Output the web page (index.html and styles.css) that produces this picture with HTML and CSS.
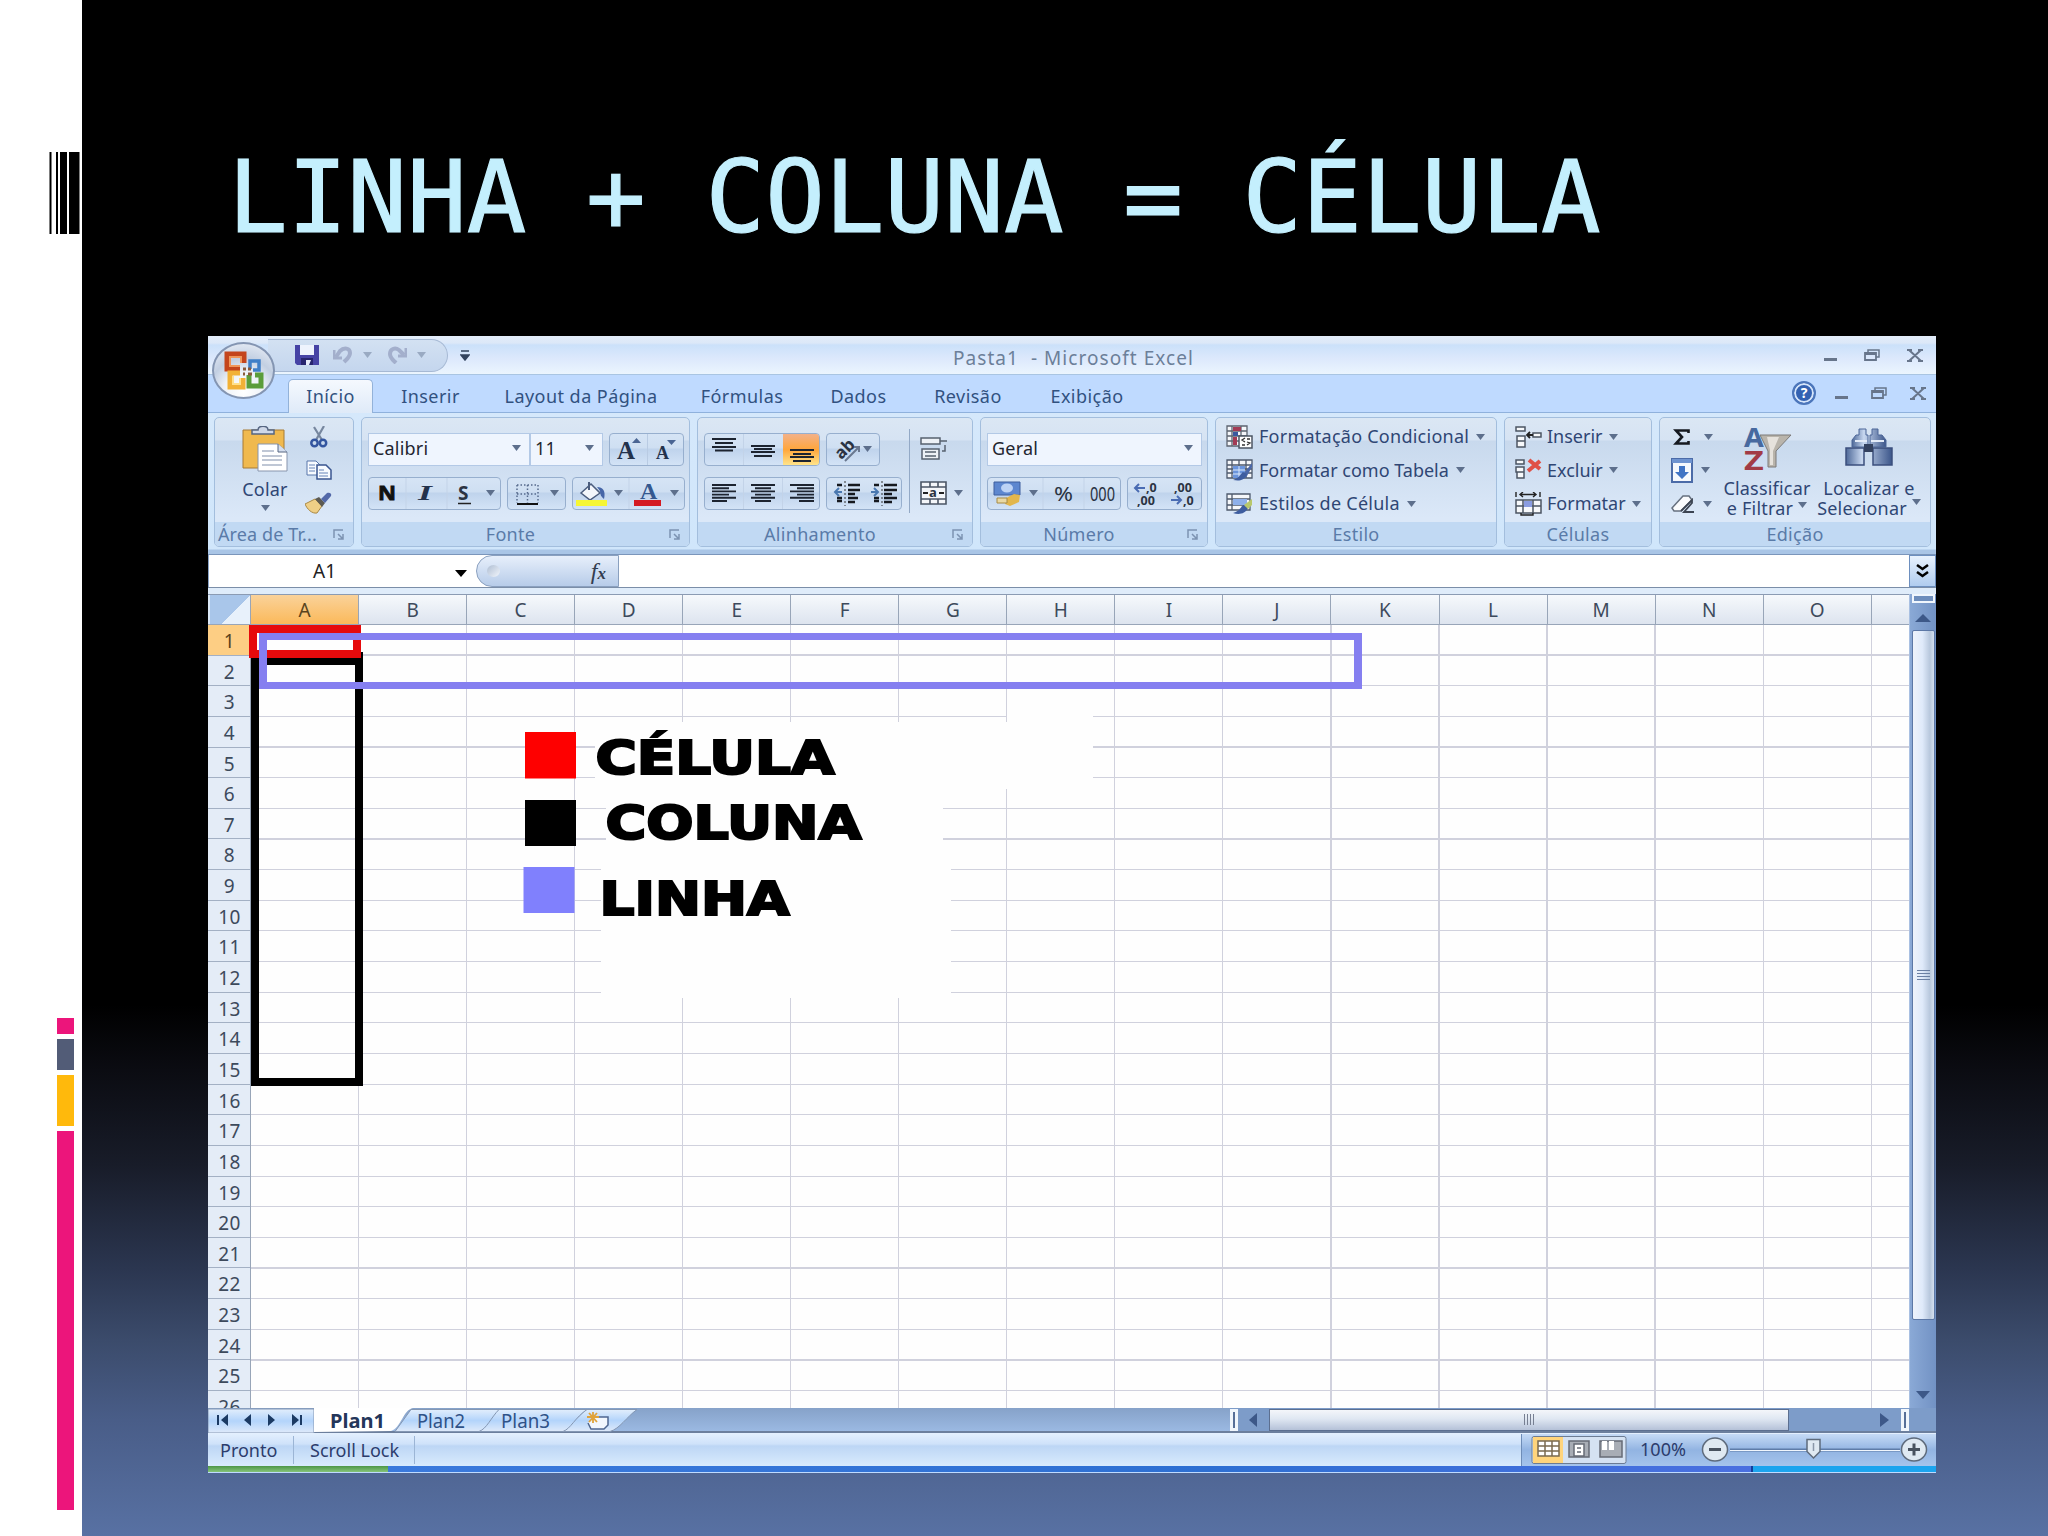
FILE: index.html
```
<!DOCTYPE html>
<html lang="pt-BR">
<head>
    <meta charset="UTF-8">
    <meta name="viewport" content="width=device-width, initial-scale=1.0">
    <title>Linha + Coluna = Célula</title>
    <link rel="stylesheet" href="styles.css">
</head>
<body>
    <svg class="defs" width="0" height="0">
        <defs>
            <symbol id="down" viewBox="0 0 9 6"><path d="M0 0h9L4.500 6z" fill="#5d6f8c"/></symbol>
            <symbol id="launch" viewBox="0 0 12 11"><path d="M1 9V1h9M5 5l5 5M10 5v5H5" fill="none" stroke="#7c93b2" stroke-width="1.500"/></symbol>
            <symbol id="restore" viewBox="0 0 16 12"><path d="M4 3V1h11v7h-3" fill="none" stroke="#67758b" stroke-width="1.500"/><path d="M1 4h11v7H1zM1 5h11" fill="none" stroke="#67758b" stroke-width="1.800"/></symbol>
            <symbol id="close" viewBox="0 0 16 13"><path d="M2 1l12 11M14 1L2 12M0 1h5M11 1h5M0 12h5M11 12h5" fill="none" stroke="#67758b" stroke-width="2"/></symbol>
            <linearGradient id="steel" x1="0" x2="1"><stop offset="0" stop-color="#4d6898"/><stop offset=".35" stop-color="#c8d8f0"/><stop offset="1" stop-color="#3c568a"/></linearGradient>
        </defs>
    </svg>

    <div class="slide">
        <aside class="sidebar">
            <svg class="barcode" width="31" height="82"><path d="M.500 0h2v82h-2zM7 0h2v82H7zM11 0h7v82h-7zM20 0h10.500v82H20z"/></svg>
            <div class="strips">
                <span class="strip pink small"></span>
                <span class="strip slate"></span>
                <span class="strip yellow"></span>
                <span class="strip pink"></span>
            </div>
        </aside>

        <main class="content">
            <h1>LINHA + COLUNA = CÉLULA</h1>

            <div class="excel">
                <!-- title bar -->
                <div class="titlebar">
                    <div class="qat">
                        <svg class="save" width="24" height="20" viewBox="0 0 24 20"><path d="M0 0h24v20H2l-2-2z" fill="#4643a5"/><path d="M5 0h14v10H5z" fill="#eef3fd"/><path d="M6 13h12v7H6z" fill="#28256f"/><path d="M11 15h5l-2 5h-3z" fill="#e8ecfa"/></svg>
                        <svg class="undo" width="20" height="18" viewBox="0 0 20 18"><path d="M1 4v8h8" fill="none" stroke="#a3afcc" stroke-width="3"/><path d="M3 11l4-6c4-4 10-3 10 2 0 4-3 6-6 9" fill="none" stroke="#a3afcc" stroke-width="4"/></svg>
                        <svg class="mini" width="9" height="6"><use href="#down"/></svg>
                        <svg class="redo" width="20" height="18" viewBox="0 0 20 18"><path d="M19 2v8h-8" fill="none" stroke="#a3afcc" stroke-width="3"/><path d="M17 9l-5-5C8 1 3 3 3 8c0 4 3 6 6 9" fill="none" stroke="#a3afcc" stroke-width="4"/></svg>
                        <svg class="mini" width="9" height="6"><use href="#down"/></svg>
                    </div>
                    <svg class="customize" width="10" height="11"><path d="M1 1h8M1 5h8l-4 5z" fill="#33445f" stroke="#33445f" stroke-width="1.500"/></svg>
                    <span class="doc-title">Pasta1 &nbsp;- Microsoft Excel</span>
                    <div class="controls">
                        <span class="min"></span>
                        <svg width="16" height="12"><use href="#restore"/></svg>
                        <svg width="16" height="13"><use href="#close"/></svg>
                    </div>
                </div>
                <div class="orb">
                    <svg width="40" height="40" viewBox="0 0 40 40" fill="none">
                        <path d="M16 18H3V3h17v9" stroke="#c4451c" stroke-width="5"/><path d="M16 15H6V6h11v6" stroke="#f0965a" stroke-width="2"/>
                        <path d="M26 10h9v9h-9z" stroke="#3f7fc8" stroke-width="3.500" stroke-dasharray="24 4"/>
                        <path d="M16 22H6v14h13v-9" stroke="#f2b136" stroke-width="5"/><path d="M9 25v8h7v-6" stroke="#ffe08a" stroke-width="2"/>
                        <path d="M25 24v11h12V24h-6" stroke="#5b9d3a" stroke-width="5"/>
                        <path d="M19 18h3M24 18h3M19 23h2M24 23h4" stroke="#8a5a3a" stroke-width="3"/>
                    </svg>
                </div>

                <!-- ribbon tabs -->
                <nav class="tabs">
                    <span class="tab active t1">Início</span>
                    <span class="tab t2">Inserir</span>
                    <span class="tab t3">Layout da Página</span>
                    <span class="tab t4">Fórmulas</span>
                    <span class="tab t5">Dados</span>
                    <span class="tab t6">Revisão</span>
                    <span class="tab t7">Exibição</span>
                    <div class="controls doc">
                        <span class="help">?</span>
                        <span class="min"></span>
                        <svg width="16" height="12"><use href="#restore"/></svg>
                        <svg width="16" height="13"><use href="#close"/></svg>
                    </div>
                </nav>

                <!-- ribbon -->
                <div class="ribbon">
                    <section class="group g-clip">
                        <div class="body">
                            <div class="big paste">
                                <svg width="46" height="46" viewBox="0 0 46 46"><path d="M1 4h41v38H1z" fill="#f0b94e" stroke="#a77b35"/><path d="M10 8V4h6c0-5 10-5 10 0h6v4z" fill="#cfd8e8" stroke="#566682" stroke-width="1.500"/><path d="M16 18h20l9 8v19H16z" fill="#fff" stroke="#8895ad"/><path d="M36 18v8h9" fill="#d5dfef" stroke="#566682"/><path d="M20 25h12M20 30h20M20 34h20M20 39h20" stroke="#aab5c8" stroke-width="1.500"/></svg>
                                <span>Colar</span>
                                <svg class="arr" width="9" height="6"><use href="#down"/></svg>
                            </div>
                            <div class="stack">
                                <svg width="18" height="22" viewBox="0 0 18 22" fill="none"><path d="M4 1l8 13M14 0L6 14" stroke="#77879f" stroke-width="2.200"/><circle cx="4.500" cy="17" r="3.200" stroke="#33559f" stroke-width="2.500"/><circle cx="13" cy="17" r="3.200" stroke="#33559f" stroke-width="2.500"/></svg>
                                <svg width="26" height="20" viewBox="0 0 26 20"><path d="M1 1h9l4 4v10H1z" fill="#f8fbff" stroke="#5876ab"/><path d="M11 5h9l5 5v9H11z" fill="#f8fbff" stroke="#3a5690" stroke-width="1.500"/><path d="M3 5h6M3 8h6M3 11h6M13 10h5M13 13h9M13 16h9" stroke="#6784b8"/></svg>
                                <svg width="27" height="22" viewBox="0 0 27 22"><path d="M0 12l10-5 7 7-5 7c-5 1-10-4-12-9z" fill="#efcf86" stroke="#a98845"/><path d="M10 7l4-2 6 6-3 4z" fill="#5c5a52"/><path d="M16 7l6-6c3-1 5 1 4 3l-6 7z" fill="#5268a8"/></svg>
                            </div>
                        </div>
                        <footer><span>Área de Tr...</span><svg width="12" height="11"><use href="#launch"/></svg></footer>
                    </section>

                    <section class="group g-font">
                        <div class="body rows">
                            <div class="row">
                                <div class="combo c-font"><span>Calibri</span><svg width="9" height="6"><use href="#down"/></svg></div>
                                <div class="combo c-size"><span>11</span><svg width="9" height="6"><use href="#down"/></svg></div>
                                <div class="btns b-grow">
                                    <svg width="75" height="31" viewBox="0 0 75 31"><path d="M37.500 0v31" stroke="#b9cbe3"/><text class="serif" x="7" y="25" font-size="25">A</text><text class="serif" x="46" y="25" font-size="18">A</text><path d="M22 9h9l-4.500-5z" fill="#4a6593"/><path d="M57 6h9l-4.500 5z" fill="#4a6593"/></svg>
                                </div>
                            </div>
                            <div class="row">
                                <div class="btns b-nis">
                                    <svg width="131" height="31" viewBox="0 0 131 31"><path d="M37 0v31M78 0v31" stroke="#c3d3e8"/><text class="sans b dark" x="9" y="22" font-size="19" stroke="#111" stroke-width=".8" textLength="18" lengthAdjust="spacingAndGlyphs">N</text><text class="serif it" x="49" y="22" font-size="21" textLength="14" lengthAdjust="spacingAndGlyphs">I</text><text class="sans b" x="89" y="22" font-size="19">S</text><path d="M89 25.500h13" stroke="#222" stroke-width="1.600"/><use href="#down" x="117" y="12" width="9" height="6"/></svg>
                                </div>
                                <div class="btns b-bord">
                                    <svg width="57" height="31" viewBox="0 0 57 31"><path d="M9 7h21v18M9 7v18M19.500 7v18M9 16h21" fill="none" stroke="#566a8c" stroke-width="1.500" stroke-dasharray="1.500 2"/><path d="M9 26h21" stroke="#111" stroke-width="2.200"/><use href="#down" x="42" y="12" width="9" height="6"/></svg>
                                </div>
                                <div class="btns b-color">
                                    <svg width="112" height="31" viewBox="0 0 112 31"><path d="M8 15l10-9 9 9-10 7z" fill="#f3f6fb" stroke="#4b5d7e" stroke-width="1.500"/><path d="M16 4v8" stroke="#4b5d7e" stroke-width="2"/><path d="M24 9c6 0 9 4 7 12-3-2-4-5-4-8z" fill="#4666a8"/><path d="M3 22h31v6H3z" fill="#f6f634"/><use href="#down" x="41" y="12" width="9" height="6"/><path d="M56 0v31" stroke="#c3d3e8"/><text class="serif blue" x="67" y="21" font-size="24">A</text><path d="M61 22h27v6H61z" fill="#d41a22"/><use href="#down" x="97" y="12" width="9" height="6"/></svg>
                                </div>
                            </div>
                        </div>
                        <footer><span>Fonte</span><svg width="12" height="11"><use href="#launch"/></svg></footer>
                    </section>

                    <section class="group g-align">
                        <div class="body">
                            <div class="rows">
                                <div class="row">
                                    <div class="btns b-al">
                                        <svg width="115" height="31" viewBox="0 0 115 31"><defs><linearGradient id="hot" x2="0" y2="1"><stop stop-color="#f3b189"/><stop offset=".5" stop-color="#ffa63b"/><stop offset="1" stop-color="#ffe48a"/></linearGradient></defs><path d="M78 0h37v31H78z" fill="url(#hot)"/><path d="M38.500 0v31" stroke="#c3d3e8"/><path d="M7 5h24M10 9h18M7 13h24M10 16.500h18M46 12h24M49 15h18M46 18h24M49 22h18M85 16h24M88 20h18M85 23h24M88 27h18" stroke="#1d2430" stroke-width="1.900"/></svg>
                                    </div>
                                    <div class="btns b-ab">
                                        <svg width="53" height="31" viewBox="0 0 53 31"><text class="sans b" x="10" y="24" font-size="17" transform="rotate(-45 15 20)">ab</text><path d="M18 27l13-13M27 13h5v5" stroke="#6a7890" stroke-width="2" fill="none"/><use href="#down" x="36" y="12" width="9" height="6"/></svg>
                                    </div>
                                </div>
                                <div class="row">
                                    <div class="btns b-al">
                                        <svg width="115" height="31" viewBox="0 0 115 31"><path d="M38.500 0v31M77.500 0v31" stroke="#c3d3e8"/><path d="M7 7h24M7 10.200h17M7 13.400h24M7 16.600h17M7 19.800h24M7 23h15M46 7h24M50 10.200h16M46 13.400h24M50 16.600h16M46 19.800h24M50 23h16M85 7h24M92 10.200h17M85 13.400h24M92 16.600h17M85 19.800h24M94 23h15" stroke="#1d2430" stroke-width="1.900"/></svg>
                                    </div>
                                    <div class="btns b-ind">
                                        <svg width="75" height="31" viewBox="0 0 75 31"><path d="M10 7h5M10 20h5M10 23h5M21 7h12M21 12h12M21 16h7M21 20h10M21 24h7M47 7h5M47 20h5M47 23h5M57 7h13M57 12h13M57 16h8M57 20h13M57 24h8" stroke="#16191f" stroke-width="2.500"/><path d="M18 3v25M55 3v25" stroke="#333" stroke-dasharray="2 2"/><path d="M15 14H9M12 10l-4 4 4 4M44 14h6M47 10l4 4-4 4" stroke="#4a78b0" stroke-width="2" fill="none"/></svg>
                                    </div>
                                </div>
                            </div>
                            <div class="wraps">
                                <svg width="28" height="24" viewBox="0 0 28 24"><path d="M1 1h19v6H1zM2 12h17v10H2z" fill="#edf1f6" stroke="#57616f" stroke-width="1.500"/><path d="M20 4h7M5 15h11M5 19h11M25 8v6h-3" fill="none" stroke="#57616f" stroke-width="1.500"/></svg>
                                <div class="merge">
                                    <svg width="28" height="24" viewBox="0 0 28 24"><path d="M1 1h25v22H1zM1 6h25M1 18h25M10 1v5M18 1v5M10 18v5M18 18v5" fill="#f4f6f9" stroke="#4b5665" stroke-width="1.600"/><text class="sans b" x="9" y="16" font-size="13">a</text><path d="M3 12h5M19 12h5" stroke="#222" stroke-width="2"/></svg>
                                    <svg width="9" height="6"><use href="#down"/></svg>
                                </div>
                            </div>
                        </div>
                        <footer><span>Alinhamento</span><svg width="12" height="11"><use href="#launch"/></svg></footer>
                    </section>

                    <section class="group g-num">
                        <div class="body rows">
                            <div class="row">
                                <div class="combo c-num"><span>Geral</span><svg width="9" height="6"><use href="#down"/></svg></div>
                            </div>
                            <div class="row">
                                <div class="btns b-num">
                                    <svg width="133" height="31" viewBox="0 0 133 31"><path d="M55 0v31M96 0v31" stroke="#c3d3e8"/><path d="M6 4h26v13H6z" fill="#5d87cf" stroke="#3e5f9e"/><ellipse cx="19" cy="10" rx="6" ry="4.500" fill="#bdd3f5"/><path d="M18 20l8-4 6 1-1 7-9 4-5-2z" fill="#e2b64c"/><path d="M9 20h10v5H9z" fill="#e9d9a4" stroke="#a68a45"/><use href="#down" x="41" y="12" width="9" height="6"/><text class="sans" x="66" y="23" font-size="20" textLength="19" lengthAdjust="spacingAndGlyphs">%</text><text class="sans" x="102" y="23" font-size="19" textLength="25" lengthAdjust="spacingAndGlyphs">000</text></svg>
                                </div>
                                <div class="btns b-dec">
                                    <svg width="75" height="31" viewBox="0 0 75 31"><text class="sans b" x="18" y="14" font-size="12.500">,0</text><text class="sans b" x="9" y="27" font-size="12.500">,00</text><text class="sans b" x="46" y="14" font-size="12.500">,00</text><text class="sans b" x="55" y="27" font-size="12.500">,0</text><path d="M17 10H7M11 6l-4 4 4 4M43 22h9M49 18l4 4-4 4" fill="none" stroke="#4a6cb3" stroke-width="2"/></svg>
                                </div>
                            </div>
                        </div>
                        <footer><span>Número</span><svg width="12" height="11"><use href="#launch"/></svg></footer>
                    </section>

                    <section class="group g-style">
                        <div class="body list">
                            <div class="item"><svg width="27" height="24" viewBox="0 0 27 24"><path d="M1 1h20v20H1zM1 6h20M1 11h20M1 16h20M6 1v20M15 1v20" fill="#f5f7fa" stroke="#5c6470" stroke-width="1.300"/><path d="M7 2h8v4H7zM7 12h4v8H7z" fill="#a33b55"/><path d="M7 7h5v4H7z" fill="#3b5aa0"/><path d="M13 11h13v12H13z" fill="#fff" stroke="#4c5563" stroke-width="1.500"/><path d="M19 13l-3 2 3 2M16 20h3M21 14h3M21 17l3 1-3 2" fill="none" stroke="#333" stroke-width="1.300"/></svg><span>Formatação Condicional</span><svg width="9" height="6"><use href="#down"/></svg></div>
                            <div class="item tight"><svg width="27" height="24" viewBox="0 0 27 24"><path d="M1 2h25v18H1zM1 7h25M1 11h25M1 15h25M6 2v18M13 2v18M20 2v18" fill="#f5f7fa" stroke="#4d596c" stroke-width="1.300"/><path d="M7 8h12v12H7z" fill="#6b95dd"/><path d="M7 12h12M7 16h12M13 8v12" stroke="#dbe8fa"/><path d="M26 5l-8 10-4 6c5 0 7-2 8-5l4-7z" fill="#4a67a8"/><path d="M7 22c6 1 11 1 14-6l-4-2c-2 1-3 6-10 8z" fill="#3e5d9f"/></svg><span>Formatar como Tabela</span><svg width="9" height="6"><use href="#down"/></svg></div>
                            <div class="item"><svg width="27" height="24" viewBox="0 0 27 24"><path d="M1 2h23v16H1zM1 7h23M1 13h23M6 2v16" fill="#f5f7fa" stroke="#4d596c" stroke-width="1.300"/><path d="M7 7h14v6H7z" fill="#8eb0ea"/><path d="M7 21c6 2 12 1 15-5l-4-3c-3 0-3 6-11 8z" fill="#3e5d9f"/><path d="M18 13l8-6v6l-4 4z" fill="#b9c86b"/></svg><span>Estilos de Célula</span><svg width="9" height="6"><use href="#down"/></svg></div>
                        </div>
                        <footer><span>Estilo</span></footer>
                    </section>

                    <section class="group g-cells">
                        <div class="body list">
                            <div class="item tight"><svg width="27" height="24" viewBox="0 0 27 24"><path d="M1 2h9v4H1zM2 16h8v6H2zM2 11h8v5H2zM18 8h8v4h-8z" fill="#f7f9fb" stroke="#4c5563" stroke-width="1.500"/><path d="M18 10h-6M15 7l-3 3 3 3" fill="none" stroke="#222" stroke-width="1.800"/></svg><span>Inserir</span><svg width="9" height="6"><use href="#down"/></svg></div>
                            <div class="item tight"><svg width="27" height="24" viewBox="0 0 27 24"><path d="M1 2h8v4H1zM1 9h8v5H1zM2 14h7v6H2z" fill="#f7f9fb" stroke="#4c5563" stroke-width="1.500"/><path d="M14 2l11 9M25 3L13 13" stroke="#df5147" stroke-width="4"/></svg><span>Excluir</span><svg width="9" height="6"><use href="#down"/></svg></div>
                            <div class="item tight"><svg width="27" height="24" viewBox="0 0 27 24"><path d="M1 8h25v13H1zM1 14h25M8 8v13M18 8v13" fill="#f7f9fb" stroke="#4c5563" stroke-width="1.500"/><path d="M9 9h8v6H9z" fill="#8a9ce0"/><path d="M6 21v2h12v-2M1 0v5M25 0v5M5 2.500h16M8 0L5 2.500 8 5M18 0l3 2.500L18 5" fill="none" stroke="#222" stroke-width="1.400"/></svg><span>Formatar</span><svg width="9" height="6"><use href="#down"/></svg></div>
                        </div>
                        <footer><span>Células</span></footer>
                    </section>

                    <section class="group g-edit">
                        <div class="body">
                            <div class="tools">
                                <div class="item sum"><svg width="18" height="16" viewBox="0 0 18 16"><path d="M15.500 4V1.500H3l6 6.500-6 6.500h12.500V12" fill="none" stroke="#15181f" stroke-width="2.600"/></svg><svg width="9" height="6"><use href="#down"/></svg></div>
                                <div class="item"><svg width="22" height="25" viewBox="0 0 22 25"><path d="M1 1h20v23H1z" fill="#f5f8fd" stroke="#4b6ba8" stroke-width="2"/><path d="M1 1h20v4H1z" fill="#6e93d0"/><path d="M8 8h6v6h4l-7 7-7-7h4z" fill="#3f73c4"/></svg><svg width="9" height="6"><use href="#down"/></svg></div>
                                <div class="item"><svg width="24" height="20" viewBox="0 0 24 20"><path d="M1 14L12 2h6l3 4-11 11H3z" fill="#fafbfd" stroke="#66707f" stroke-width="1.500"/><path d="M10 17l11-11v3L13 18h10" fill="none" stroke="#3c4452" stroke-width="1.800"/></svg><svg width="9" height="6"><use href="#down"/></svg></div>
                            </div>
                            <div class="big sort">
                                <svg width="49" height="44" viewBox="0 0 49 44"><path d="M17 8h31L33 24v16h-8V24z" fill="#b9b4ab" stroke="#7c7a78"/><path d="M24 10h12l-6 14v14h-3V23z" fill="#e6e2dc"/><text class="sans b az" x="1" y="20" font-size="26" textLength="20" lengthAdjust="spacingAndGlyphs">A</text><text class="sans b az" x="1" y="43" font-size="27" textLength="20" lengthAdjust="spacingAndGlyphs">Z</text></svg>
                                <span>Classificar</span>
                                <span>e Filtrar<svg width="9" height="6"><use href="#down"/></svg></span>
                            </div>
                            <div class="big find">
                                <svg width="48" height="40" viewBox="0 0 48 40"><path d="M14 1h7v6h2v12H7V12l4-5h3zM27 1h6v6h4l4 5v7H25V7h2z" fill="url(#steel)" stroke="#4d6698"/><path d="M1 20h18v17H1zM28 20h19v17H28z" fill="url(#steel)" stroke="#3b4f7d" stroke-width="1.500"/><path d="M19 16h9v8h-9z" fill="#33415f"/><path d="M10 13h12M26 13h13" stroke="#e3ebf8" stroke-width="2"/></svg>
                                <span>Localizar e</span>
                                <span>Selecionar<svg width="9" height="6"><use href="#down"/></svg></span>
                            </div>
                        </div>
                        <footer><span>Edição</span></footer>
                    </section>
                </div>

                <!-- formula bar -->
                <div class="formula">
                    <div class="namebox"><span>A1</span><svg width="12" height="7"><path d="M0 0h12L6 7z"/></svg></div>
                    <div class="fx"><i class="knob"></i><span>f<small>x</small></span></div>
                    <div class="entry"></div>
                    <div class="expand"><svg width="13" height="14" viewBox="0 0 13 14"><path d="M1 1l5.500 4L12 1M1 8l5.500 4L12 8" fill="none" stroke="#000" stroke-width="2.500"/></svg></div>
                </div>

                <!-- sheet -->
                <div class="sheet">
                    <div class="grid">
                        <div class="cols">
                            <span class="corner"></span>
                            <span class="sel">A</span><span>B</span><span>C</span><span>D</span><span>E</span><span>F</span><span>G</span><span>H</span><span>I</span><span>J</span><span>K</span><span>L</span><span>M</span><span>N</span><span>O</span><span></span>
                        </div>
                        <div class="lines">
                            <div class="nums">
                                <span class="sel">1</span><span>2</span><span>3</span><span>4</span><span>5</span><span>6</span><span>7</span><span>8</span><span>9</span><span>10</span><span>11</span><span>12</span><span>13</span><span>14</span><span>15</span><span>16</span><span>17</span><span>18</span><span>19</span><span>20</span><span>21</span><span>22</span><span>23</span><span>24</span><span>25</span><span>26</span>
                            </div>
                            <div class="cells"></div>
                        </div>
                    </div>
                    <div class="vscroll">
                        <i class="vsplit"></i>
                        <svg class="up" width="16" height="8"><path d="M0 8h16L8 0z" fill="#3d5888"/></svg>
                        <div class="vthumb"><i></i><i></i><i></i><i></i></div>
                        <svg class="dn" width="14" height="8"><path d="M0 0h14L7 8z" fill="#3d5888"/></svg>
                    </div>

                    <!-- drawings placed over the cells -->
                    <svg class="legend" width="580" height="290" viewBox="520 710 580 290">
                        <path d="M595 722h412v-11h86v78H943v66h8v143H601V855h5v-65h-11z" fill="#fefefe"/>
                        <path d="M525 732h51v46.500h-51z" fill="#fe0000"/>
                        <path d="M525 800h51v46h-51z"/>
                        <path d="M523.500 867h51v46h-51z" fill="#8080fd"/>
                        <text x="595.500" y="773.500" textLength="239" lengthAdjust="spacingAndGlyphs">CÉLULA</text>
                        <text x="605.500" y="839" textLength="256" lengthAdjust="spacingAndGlyphs">COLUNA</text>
                        <text x="599.500" y="914.500" textLength="190" lengthAdjust="spacingAndGlyphs">LINHA</text>
                    </svg>
                    <div class="mark column"></div>
                    <div class="mark cell"></div>
                    <div class="mark line"></div>
                </div>

                <!-- sheet tabs -->
                <div class="bottom">
                    <svg width="1022" height="25" viewBox="208 1408 1022 25">
                        <defs><linearGradient id="tabfill" x2="0" y2="1"><stop stop-color="#e2eefc"/><stop offset=".5" stop-color="#b3d4fb"/><stop offset="1" stop-color="#dfeafa"/></linearGradient></defs>
                        <path d="M208 1409h106v24H208z" fill="url(#tabfill)" stroke="#8497b3"/>
                        <path d="M563 1431.500h47c10-3 16-14 27-22H586z" fill="url(#tabfill)" stroke="#8497b3"/>
                        <path d="M479 1431.500h84c8-3 12-14 24-22h-90z" fill="url(#tabfill)" stroke="#8497b3"/>
                        <path d="M395 1431.500h84c8-3 12-14 20-22h-88z" fill="url(#tabfill)" stroke="#8497b3"/>
                        <path d="M314 1408h99c-10 2-12 20-22 23l-77 1z" fill="#fff"/>
                        <path d="M218 1415v10M301 1415v10" stroke="#1b3a63" stroke-width="2"/>
                        <path d="M228 1414v12l-7-6zM251 1414v12l-7-6zM268 1414v12l7-6zM292 1414v12l7-6z" fill="#1b3a63"/>
                        <text class="on" x="330" y="1427.500" textLength="55" lengthAdjust="spacingAndGlyphs">Plan1</text>
                        <text x="417" y="1427.500" textLength="48" lengthAdjust="spacingAndGlyphs">Plan2</text>
                        <text x="501" y="1427.500" textLength="49" lengthAdjust="spacingAndGlyphs">Plan3</text>
                        <path d="M595 1417h13v8l-4 4h-13l-3-6" fill="#f2f7fe" stroke="#4f6791" stroke-width="1.500"/>
                        <path d="M593 1412v11M587 1417h12M589 1413l8 9M597 1413l-8 9" stroke="#e0a23a" stroke-width="1.800"/>
                    </svg>
                    <div class="hscroll">
                        <i class="hsplit"></i>
                        <svg width="8" height="14"><path d="M8 0v14L0 7z" fill="#3d5888"/></svg>
                        <div class="hthumb"><i></i><i></i><i></i><i></i></div>
                        <svg class="right" width="9" height="14"><path d="M0 0v14l9-7z" fill="#3d5888"/></svg>
                        <i class="hsplit"></i>
                    </div>
                </div>

                <!-- status bar -->
                <div class="status">
                    <span class="cell-mode">Pronto</span>
                    <span class="lock">Scroll Lock</span>
                    <div class="zoom">
                        <svg width="414" height="32" viewBox="1522 1434 414 32">
                            <rect x="1532" y="1436.500" width="94" height="27" rx="2" fill="#d5e2f2" stroke="#6c7c94"/>
                            <path d="M1533 1437h30v26h-30z" fill="#ffd47c"/>
                            <path d="M1538 1441h21v15h-21zM1538 1446h21M1538 1451h21M1545 1441v15M1552 1441v15" fill="#fff" stroke="#7a6a50" stroke-width="1.500"/>
                            <path d="M1569 1441h20v16h-20z" fill="#a8adb5" stroke="#666b75" stroke-width="1.500"/><path d="M1574 1444h10v12h-10zM1577 1448h4M1577 1452h4" fill="#fff" stroke="#666b75" stroke-width="1.500"/>
                            <path d="M1600 1441h22v16h-22z" fill="#a8adb5" stroke="#666b75" stroke-width="1.500"/><path d="M1602 1441h5v9h-5zM1609 1441h5v9h-5z" fill="#fff"/>
                            <text x="1640" y="1456" textLength="46" lengthAdjust="spacingAndGlyphs">100%</text>
                            <path d="M1730 1450h170" stroke="#5e7ca8" stroke-width="3"/><path d="M1730 1450.500h170" stroke="#f0f6fd"/>
                            <g fill="#dfe9f2" stroke="#5e6b7c" stroke-width="1.500"><ellipse cx="1715" cy="1449.500" rx="12.500" ry="11.500"/><ellipse cx="1914" cy="1449.500" rx="12.500" ry="11.500"/><path d="M1807 1439.500h13v12l-6.500 6.500-6.500-6.500z"/></g>
                            <path d="M1709 1449.500h12M1908 1449.500h12M1914 1443.500v12" stroke="#48525f" stroke-width="3"/><path d="M1813.500 1443v8" stroke="#8a97a8" stroke-width="1.500"/>
                        </svg>
                    </div>
                </div>
                <div class="taskbar"><i class="start"></i><i class="tasks"></i><i class="tray"></i></div>
            </div>
        </main>
    </div>
</body>
</html>
```
FILE: styles.css
```
* {
    box-sizing: border-box;
}
body {
    margin: 0;
    font-family: "Noto Sans", "Open Sans", sans-serif;
    background-color: #000;
}
.defs {
    position: absolute;
}
svg {
    display: block;
    flex: none;
}
.slide {
    display: flex;
    width: 2048px;
    height: 1536px;
    overflow: hidden;
    background: linear-gradient(#000 0, #000 1005px, #0b0c12 1070px, #181c29 1165px, #2b3650 1269px, #3b4b6b 1340px, #495d88 1420px, #5871a3 1536px);
}
.sidebar {
    width: 82px;
    padding-top: 152px;
    background: #fff;
}
.barcode {
    margin-left: 49px;
}
.strips {
    display: flex;
    flex-direction: column;
    gap: 5px;
    width: 17px;
    height: 492px;
    margin: 784px 0 0 57px;
}
.strip {
    flex: 1;
}
.pink {
    background: #ec157b;
}
.strip.small {
    flex: none;
    height: 16px;
}
.slate {
    flex: none;
    height: 31px;
    background: #525c77;
}
.yellow {
    flex: none;
    height: 51px;
    background: #ffb90c;
}
.content {
    width: 1966px;
    padding-left: 126px;
}
h1 {
    height: 336px;
    margin: 0;
    padding: 140px 0 0 20px;
    font: 99px/116px "DejaVu Sans Mono", monospace;
    letter-spacing: .08px;
    color: #c4effd;
    -webkit-text-stroke: 1.200px #c4effd;
    white-space: pre;
}

/* Excel window */
.excel {
    position: relative;
    display: flex;
    flex-direction: column;
    width: 1728px;
    height: 1137px;
    background: #bfdbff;
    color: #2f4674;
    font-size: 18px;
}
.titlebar {
    display: flex;
    align-items: center;
    height: 39px;
    border-bottom: 1px solid #a9c5e2;
    background: linear-gradient(#e3edfa 0, #dce8f8 7px, #cbe1fa 9px, #dce8fc 22px, #ebf5fe 38px);
}
.qat {
    display: flex;
    align-items: center;
    width: 180px;
    height: 33px;
    margin-left: 60px;
    padding-left: 27px;
    border: 1px solid #a6b9d4;
    border-left: 0;
    border-radius: 0 17px 17px 0;
    background: linear-gradient(#d3e1f2, #c4d6ee);
}
.undo {
    margin: 0 10px 0 14px;
}
.redo {
    margin: 0 10px 0 15px;
}
.mini {
    opacity: .45;
}
.customize {
    margin-left: 12px;
}
.doc-title {
    margin-left: 483px;
    padding-top: 5px;
    font-size: 19px;
    letter-spacing: 1.050px;
    color: #6c7f99;
    white-space: nowrap;
}
.controls {
    display: flex;
    align-items: center;
    gap: 27px;
    margin-left: auto;
    padding-right: 13px;
}
.min {
    width: 13px;
    height: 3px;
    margin: 9px 0 0 0;
    background: #67758b;
}
.orb {
    position: absolute;
    left: 4px;
    top: 6px;
    display: flex;
    align-items: center;
    justify-content: center;
    width: 63px;
    height: 57px;
    border: 2px solid #8495b2;
    border-radius: 50%;
    background: radial-gradient(circle at 50% 90%, #fff 0, #eef2f8 35%, #c2cfe2 60%, #f1f4fa 100%);
    z-index: 2;
}
.tabs {
    display: flex;
    height: 38px;
    padding-left: 80px;
    padding-top: 4px;
    background: #bfdaff;
    border-bottom: 1px solid #8fb1dc;
}
.tab {
    height: 34px;
    line-height: 34px;
    text-align: center;
    letter-spacing: .45px;
    color: #31517f;
    white-space: nowrap;
}
.tab.active {
    border: 1px solid #93b2d9;
    border-bottom: 0;
    border-radius: 5px 5px 0 0;
    background: linear-gradient(#f5f9fe, #dfeaf8);
    line-height: 33px;
}
.t1 { width: 85px; }
.t2 { width: 115px; }
.t3 { width: 186px; }
.t4 { width: 136px; }
.t5 { width: 97px; }
.t6 { width: 122px; }
.t7 { width: 116px; }
.controls.doc {
    gap: 23px;
    padding-right: 10px;
    margin-top: -5px;
}
.controls.doc .min {
    margin-right: 0;
    margin-left: -4px;
}
.help {
    width: 24px;
    height: 24px;
    border: 2px solid #4c76bb;
    border-radius: 50%;
    background: #3462b2;
    box-shadow: inset 0 0 0 2px #d5e5fa;
    color: #fff;
    font-size: 14px;
    font-weight: bold;
    line-height: 20px;
    text-align: center;
}

/* ribbon */
.ribbon {
    display: flex;
    gap: 7px;
    height: 142px;
    padding: 4px 0 8px 6px;
    border-bottom: 1px solid #7b96bb;
    background: linear-gradient(#d5e8fb 0, #d0e6fb 136px, #a9c5e6 137px);
}
.group {
    display: flex;
    flex-direction: column;
    height: 130px;
    border: 1px solid #a3bedd;
    border-radius: 5px;
    overflow: hidden;
    background: linear-gradient(#dbe7f4 0, #d6e3f3 22px, #c8d9ed 23px, #dbe8f8 100px);
}
.g-clip { width: 140px; }
.g-font { width: 329px; }
.g-align { width: 276px; }
.g-num { width: 228px; }
.g-style { width: 282px; }
.g-cells { width: 148px; }
.g-edit { width: 272px; }
.body {
    display: flex;
    height: 104px;
    flex: none;
}
.group footer {
    display: flex;
    flex: 1;
    align-items: center;
    padding: 0 8px 2px;
    background: #c1d9f3;
    color: #5a7ba8;
    letter-spacing: .3px;
    white-space: nowrap;
}
.group footer span {
    flex: 1;
    text-align: center;
}
.g-clip footer {
    padding-left: 3px;
}
.g-clip footer span {
    text-align: left;
    letter-spacing: .1px;
}
.g-font footer span,
.g-align footer span,
.g-num footer span {
    padding-right: 18px;
}
.big {
    display: flex;
    flex-direction: column;
    align-items: center;
    line-height: 20px;
    letter-spacing: .2px;
    white-space: nowrap;
}
.paste {
    margin: 8px 0 0 27px;
}
.paste span {
    margin-top: 7px;
}
.arr {
    margin-top: 6px;
}
.stack {
    display: flex;
    flex-direction: column;
    align-items: center;
    gap: 12px;
    margin: 8px 0 0 17px;
}
.rows {
    display: flex;
    flex-direction: column;
    gap: 11px;
    padding: 15px 0 0 6px;
}
.row {
    display: flex;
    gap: 6px;
}
.combo {
    display: flex;
    align-items: center;
    justify-content: space-between;
    height: 33px;
    padding: 0 8px 3px 4px;
    border: 1px solid #b3c9e6;
    background: #eff5fe;
    color: #1f2530;
    letter-spacing: .2px;
}
.c-font { width: 162px; margin-right: -6px; }
.c-size { width: 73px; }
.c-num { width: 215px; }
.btns {
    height: 33px;
    border: 1px solid #97afce;
    border-radius: 4px;
    overflow: hidden;
    background: linear-gradient(#d6e4f5 0, #cfdff2 14px, #bfd3ec 15px, #d3e3f6 31px);
}
.b-grow { width: 75px; }
.b-nis { width: 133px; }
.b-bord { width: 59px; }
.b-color { width: 113px; }
.b-al { width: 116px; }
.b-ab { width: 54px; }
.b-ind { width: 76px; }
.b-num { width: 134px; }
.b-dec { width: 75px; }
.serif {
    font-family: "Liberation Serif", serif;
    font-weight: bold;
    fill: #23324c;
}
.it {
    font-style: italic;
}
.blue {
    fill: #35588f;
}
.sans {
    font-family: "Noto Sans", sans-serif;
    fill: #2b3342;
}
.dark {
    fill: #111;
}
.b {
    font-weight: bold;
}
.az {
    fill: #47699f;
}
.az + .az {
    fill: #a23b45;
}
.wraps {
    display: flex;
    flex-direction: column;
    gap: 20px;
    height: 84px;
    margin: 11px 0 0 7px;
    padding: 8px 0 0 10px;
    border-left: 1px solid #93a9c6;
}
.merge {
    display: flex;
    align-items: center;
    gap: 6px;
}
.list {
    flex-direction: column;
    padding: 2px 0 0 10px;
}
.item {
    display: flex;
    align-items: center;
    height: 33.600px;
    gap: 6px;
    letter-spacing: .25px;
    white-space: nowrap;
}
.item.tight {
    letter-spacing: 0;
}
.g-cells .item {
    gap: 5px;
}
.item span {
    margin-top: -1px;
}
.item span + svg {
    margin-left: 1px;
}
.tools {
    width: 63px;
    padding: 2px 0 0 11px;
}
.tools .item {
    gap: 8px;
}
.tools .sum {
    gap: 13px;
    padding-left: 2px;
}
.sort {
    width: 88px;
    margin-top: 9px;
}
.sort svg:first-child {
    margin-bottom: 7px;
}
.find {
    width: 110px;
    margin-top: 10px;
    padding-left: 6px;
}
.find svg:first-child {
    margin-bottom: 10px;
}
.big span svg {
    display: inline-block;
    margin: 0 0 3px 5px;
}

/* formula bar */
.formula {
    display: flex;
    height: 33px;
    border-bottom: 1px solid #7b8ea8;
    background: #fff;
}
.namebox {
    display: flex;
    align-items: center;
    width: 268px;
    padding-left: 104px;
    border-left: 1px solid #8aa4c8;
    color: #222;
    font-size: 19px;
}
.namebox span {
    flex: 1;
}
.namebox svg {
    margin: 4px 9px 0 0;
}
.fx {
    display: flex;
    align-items: center;
    justify-content: space-between;
    width: 143px;
    padding: 0 12px 0 10px;
    border: 1px solid #8aa0bf;
    border-radius: 16px 0 0 16px;
    background: linear-gradient(#e7effb, #b7cce9);
    font: italic 24px "Liberation Serif", serif;
    color: #333d50;
}
.fx small {
    font-size: 17px;
    font-weight: bold;
}
.knob {
    width: 13px;
    height: 12px;
    border-radius: 50%;
    background: linear-gradient(135deg, #aebdd2, #f2f6fc);
}
.entry {
    flex: 1;
}
.expand {
    display: flex;
    align-items: center;
    justify-content: center;
    width: 27px;
    border: 1px solid #6d8fbf;
    background: linear-gradient(#e8f2fe, #b0ccef);
}

/* sheet */
.sheet {
    position: relative;
    display: flex;
    height: 820px;
    padding-top: 6px;
    background: #dfecfa;
}
.grid {
    width: 1701px;
    height: 814px;
    overflow: hidden;
}
.cols {
    display: flex;
    height: 31px;
    width: 1900px;
    border-top: 1px solid #8b9bb3;
    border-bottom: 1px solid #98a5b8;
    background: linear-gradient(#f6f9fc, #dde4ef);
    color: #3d4a5c;
    font-size: 19px;
}
.cols span {
    width: 108.050px;
    border-right: 1px solid #98a5b8;
    line-height: 31px;
    text-align: center;
}
.cols .corner {
    width: 43px;
    border-left: 2px solid #dbe8f7;
    background: linear-gradient(135deg, #a9c6ea 58%, #e8f1fb 59%);
}
.cols .sel {
    background: linear-gradient(#fad29a, #fbb95a);
    color: #59431d;
}
.lines {
    display: flex;
}
.nums {
    width: 43px;
    border-right: 1px solid #98a5b8;
    background: #e4ecf7;
    color: #3d4a5c;
    font-size: 19px;
}
.nums span {
    display: block;
    height: 30.650px;
    padding-left: 1px;
    border-bottom: 1px solid #a3b0c4;
    line-height: 33px;
    letter-spacing: .5px;
    text-align: center;
}
.nums .sel {
    background: #fdce84;
    color: #59431d;
}
.cells {
    flex: 1;
    background-color: #fefefe;
    background-image:
        repeating-linear-gradient(90deg, transparent 0, transparent 106.850px, #d0d1dd 106.850px, #d0d1dd 108.050px),
        repeating-linear-gradient(transparent 0, transparent 29.450px, #d0d1dd 29.450px, #d0d1dd 30.650px);
}
.vscroll {
    display: flex;
    flex-direction: column;
    align-items: center;
    width: 27px;
    border-left: 1px solid #a9c0e2;
    background: linear-gradient(90deg, #8aa9d6, #7292c4);
}
.vsplit {
    width: 23px;
    height: 9px;
    border: 2px solid #f0f6fd;
    background: #6d8dbc;
}
.up {
    margin: 11px 0 8px;
}
.vthumb {
    display: flex;
    flex-direction: column;
    align-items: center;
    justify-content: center;
    gap: 2px;
    width: 23px;
    height: 690px;
    border: 1px solid #5c78a6;
    border-radius: 2px;
    background: linear-gradient(90deg, #eef3fb, #dfeafa 45%, #b8c8dd 80%, #d5e0ee);
}
.vthumb i {
    width: 13px;
    height: 1px;
    background: #6b80a3;
}
.dn {
    margin-top: 71px;
}
.legend {
    position: absolute;
    left: 312px;
    top: 122px;
}
.legend text {
    font-family: "DejaVu Sans", sans-serif;
    font-size: 46px;
    font-weight: bold;
    stroke: #000;
    stroke-width: 2.200px;
}
.mark {
    position: absolute;
}
.mark.column {
    left: 43px;
    top: 64px;
    width: 112px;
    height: 434px;
    border: 8px solid #000;
    border-top-width: 13px;
}
.mark.cell {
    left: 41px;
    top: 37px;
    width: 112px;
    height: 33px;
    border: 8px solid #e60a0c;
}
.mark.line {
    left: 51px;
    top: 45px;
    width: 1103px;
    height: 56px;
    border: 7px solid #857ff0;
    border-left-width: 8px;
    border-right-width: 8px;
}

/* bottom bars */
.bottom {
    display: flex;
    height: 25px;
    border-bottom: 2px solid #6c7f9d;
    background: linear-gradient(#86a2c9, #9bb9e2);
}
.bottom text {
    font-size: 19px;
    fill: #2f5288;
}
.bottom .on {
    font-weight: bold;
    fill: #24365a;
}
.hscroll {
    display: flex;
    align-items: center;
    flex: 1;
    height: 23px;
    background: #7d9cc9;
}
.hsplit {
    width: 8px;
    height: 22px;
    border: 3px solid #f0f6fd;
    background: #566f99;
}
.hscroll svg {
    margin: 0 12px 0 11px;
}
.hthumb {
    display: flex;
    align-items: center;
    justify-content: center;
    gap: 2px;
    width: 520px;
    height: 22px;
    border: 1px solid #5c6f90;
    background: linear-gradient(#f4f6fa, #dfe7f2 45%, #b5c1d8);
}
.hthumb i {
    width: 1px;
    height: 11px;
    background: #777f92;
}
.hscroll .right {
    margin: 0 12px 0 91px;
}
.status {
    display: flex;
    align-items: center;
    height: 33px;
    background: linear-gradient(#e4f0fe 0, #cfe2fa 11px, #bdd6f5 13px, #d9ebfd 33px);
    line-height: 28px;
    color: #2c3c6c;
}
.cell-mode {
    width: 86px;
    padding-left: 12px;
    border-right: 1px solid #9cb5d5;
}
.lock {
    width: 121px;
    padding-left: 16px;
    border-right: 1px solid #9cb5d5;
    white-space: nowrap;
}
.zoom {
    margin-left: auto;
    border-left: 1px solid #6e8db8;
    background: linear-gradient(#c6dbf6, #92b4e2 50%, #a5c4ec);
}
.zoom text {
    font-size: 18px;
    fill: #2c3c6c;
}
.taskbar {
    display: flex;
    height: 6px;
}
.start {
    width: 180px;
    background: linear-gradient(#4d9646, #86c47a);
}
.tasks {
    flex: 1;
    background: linear-gradient(90deg, #3a79dc, #2d6fd2 60%, #4a6fe0);
}
.tray {
    width: 185px;
    border-left: 2px solid #123f9a;
    background: #1ba4ee;
}
```
